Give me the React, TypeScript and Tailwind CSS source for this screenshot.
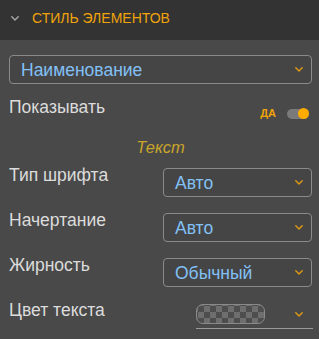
import React from "react";

const Chevron = ({ className }: { className?: string }) => (
  <svg viewBox="0 0 8 5" className={className} fill="none">
    <path d="M0.8 0.8 L4 4 L7.2 0.8" stroke="currentColor" strokeWidth="1.4" strokeLinecap="round" strokeLinejoin="round" />
  </svg>
);

const Select = ({ value, className }: { value: string; className?: string }) => (
  <div
    className={`flex h-[29px] items-center justify-between rounded-[4px] border border-[#8a8a8a] bg-[#454545] pl-[11px] pr-[8px] ${className ?? ""}`}
  >
    <span className="text-[17.5px] leading-[20px] text-[#82c0f5]">{value}</span>
    <Chevron className="h-[5px] w-[8px] text-[#e09a10]" />
  </div>
);

const Row = ({ label, children }: { label: string; children: React.ReactNode }) => (
  <div className="flex h-[45px] items-start justify-between">
    <span className="mt-[1px] text-[17.5px] leading-[20px] text-[#dcdcdc]">{label}</span>
    {children}
  </div>
);

export default function App() {
  return (
    <div
      className="h-[339px] w-[319px] overflow-hidden bg-[#494949]"
      style={{ fontFamily: '"Liberation Sans", Arial, sans-serif' }}
    >
      <div className="flex h-[40px] items-center bg-[#333333] pb-[4px] pl-[11px]">
        <Chevron className="h-[5px] w-[8px] text-[#a8a8a8]" />
        <span className="ml-[13px] text-[14px] leading-[16px] text-[#f0a30a]">СТИЛЬ ЭЛЕМЕНТОВ</span>
      </div>
      <div className="pl-[9px] pr-[7px] pt-[15px]">
        <Select value="Наименование" />
        <div className="mt-[13px] flex items-start justify-between">
          <span className="text-[17.5px] leading-[20px] text-[#dcdcdc]">Показывать</span>
          <div className="mr-[3px] mt-[11px] flex items-center">
            <span className="text-[11px] font-bold leading-[11px] text-[#f0a30a]">ДА</span>
            <div className="relative ml-[11px] h-[10px] w-[22px] rounded-full bg-[#7a7a7a]">
              <div className="absolute right-0 top-[-0.5px] h-[11px] w-[11px] rounded-full bg-[#ffab00]" />
            </div>
          </div>
        </div>
        <div className="mt-[18px] text-center text-[16.5px] italic leading-[20px] text-[#c9a52a]">Текст</div>
        <div className="mt-[7px]">
          <Row label="Тип шрифта">
            <Select value="Авто" className="mt-[4px] w-[149px]" />
          </Row>
          <Row label="Начертание">
            <Select value="Авто" className="mt-[4px] w-[149px]" />
          </Row>
          <Row label="Жирность">
            <Select value="Обычный" className="mt-[4px] w-[149px]" />
          </Row>
          <Row label="Цвет текста">
            <div className="mr-[-1px] mt-[5px] flex h-[25px] w-[117px] items-start justify-between border-b border-[#9a9a9a] pr-[10px]">
              <div
                className="h-[20px] w-[69px] rounded-[7px] border border-[#8a8a8a]"
                style={{
                  backgroundImage:
                    "conic-gradient(#6e6e6e 25%, #4e4e4e 0 50%, #6e6e6e 0 75%, #4e4e4e 0)",
                  backgroundSize: "12px 12px",
                  backgroundPosition: "1px 1px",
                }}
              />
              <Chevron className="mt-[8px] h-[5px] w-[8px] text-[#e09a10]" />
            </div>
          </Row>
        </div>
      </div>
    </div>
  );
}
